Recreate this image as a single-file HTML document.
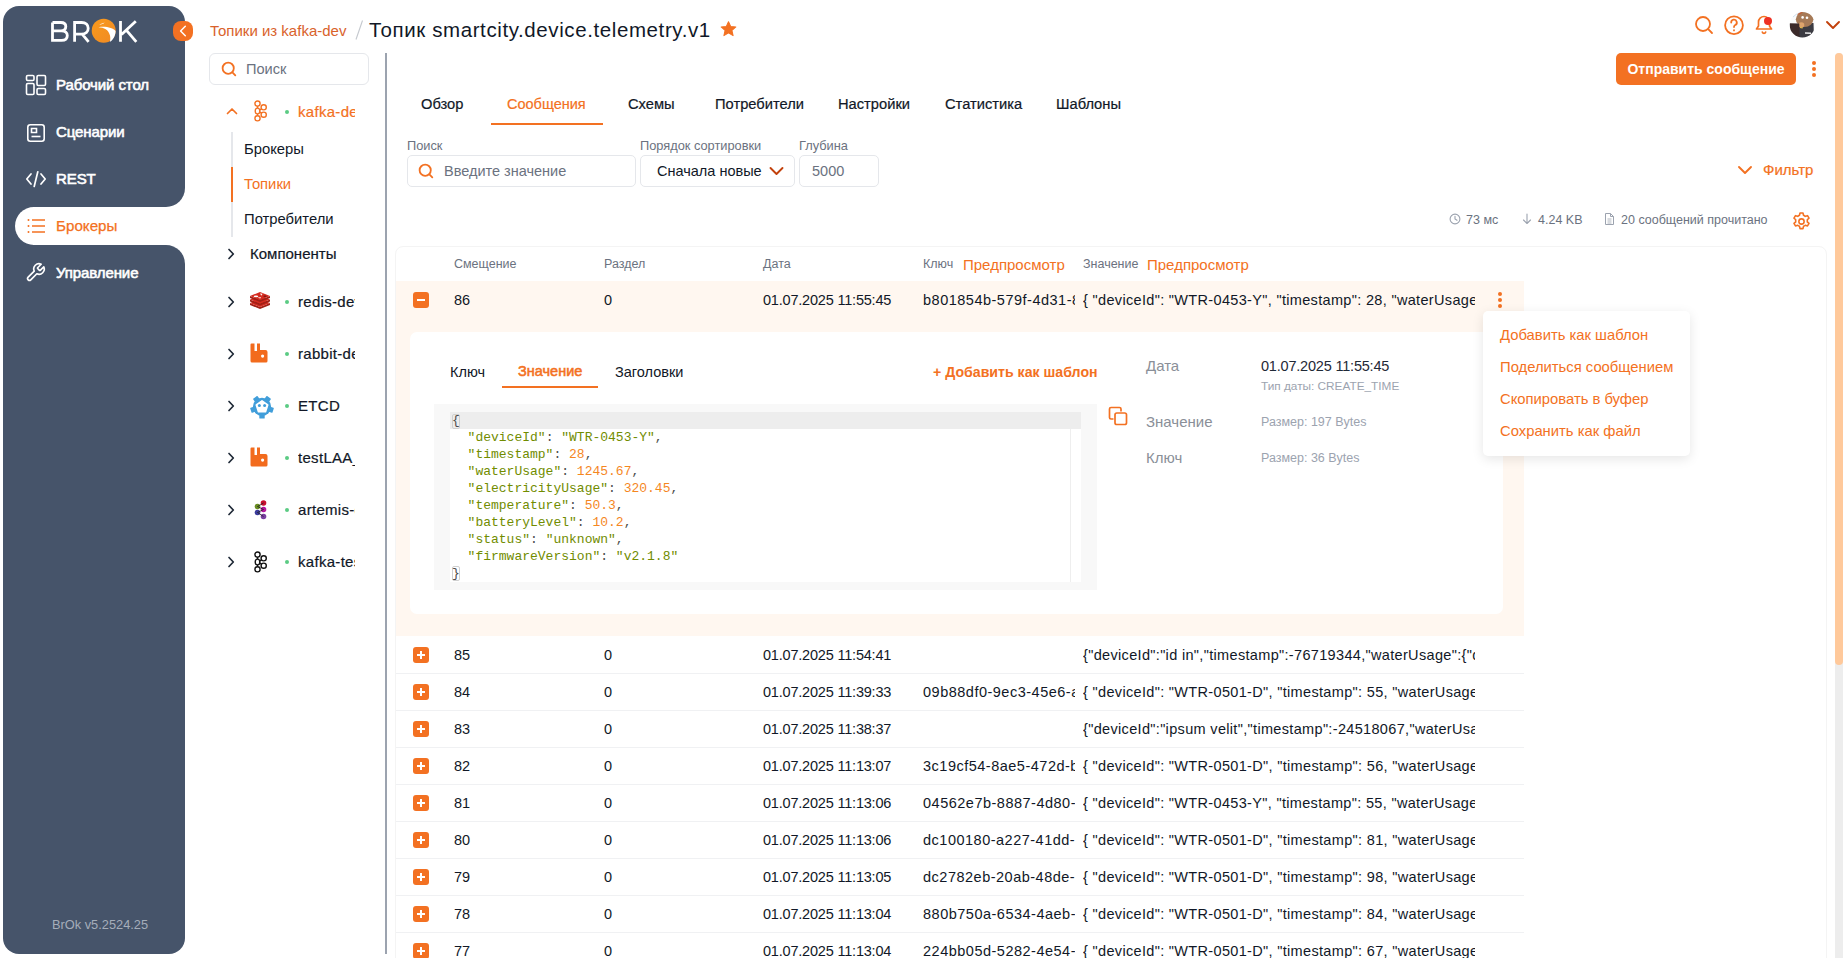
<!DOCTYPE html>
<html><head><meta charset="utf-8">
<style>
*{box-sizing:border-box;margin:0;padding:0}
html,body{width:1848px;height:958px;overflow:hidden;background:#fff;font-family:"Liberation Sans",sans-serif;color:#111827}
.a{position:absolute;white-space:nowrap}
.sb{position:absolute;background:#46546A}
.mi{position:absolute;left:56px;font-size:15px;letter-spacing:-0.1px;font-weight:normal;-webkit-text-stroke:0.6px #fff;color:#fff;line-height:18px}
.ico{position:absolute}
.or{color:#F37122}
</style></head><body>

<!-- SIDEBAR -->
<div class="sb" style="left:3px;top:6px;width:182px;height:201px;border-radius:16px 16px 19px 0"></div>
<div class="sb" style="left:3px;top:207px;width:30px;height:38px"></div>
<div class="a" style="left:15px;top:207px;width:185px;height:38px;background:#fff;border-radius:19px 0 0 19px"></div>
<div class="sb" style="left:3px;top:245px;width:182px;height:709px;border-radius:0 19px 16px 16px"></div>


<!-- logo -->
<svg class="ico" style="left:48px;top:16px" width="92" height="30" viewBox="48 16 92 30">
 <g fill="none" stroke="#fff" stroke-width="2.8">
  <path d="M52.5 22.5 V40.3 H61.5 C65.5 40.3 67.3 38.2 67.3 35.4 C67.3 32.6 65.3 30.9 61.5 30.9 H52.5 M52.5 22.5 H60.8 C64.2 22.5 65.8 24.2 65.8 26.6 C65.8 29.0 64.2 30.9 60.8 30.9"/>
  <path d="M74.6 41.8 V22.5 H81.6 C85.8 22.5 88.2 24.9 88.2 28.3 C88.2 31.7 85.8 34.1 81.6 34.1 H74.6 M82.2 34.1 L88.6 41.8"/>
  <path d="M120.5 20.9 V41.8 M135.8 21.2 L121.5 34.5 M126.3 30.2 L136.3 41.8"/>
 </g>
 <defs><linearGradient id="lg" x1="0" y1="0" x2="1" y2="1"><stop offset="0" stop-color="#F99A1C"/><stop offset="1" stop-color="#F08A24"/></linearGradient></defs>
 <circle cx="103.7" cy="30.8" r="12" fill="url(#lg)"/>
 <path d="M98.5 27.2 C104 27.5 108.5 29.5 110 35.5 C110.5 38 110.3 40.5 109.8 42 C112.5 40.5 115.5 36.5 115.6 31 C113 28 106 26 98.5 27.2 Z" fill="#fff"/>
 <path d="M99.2 24.6 C101 23.6 103 23.2 104.6 22.4 C103.5 23.8 101.5 24.6 99.2 24.6Z" fill="#fff"/>
</svg>
<!-- collapse -->
<div class="a" style="left:173px;top:21px;width:20px;height:20px;border-radius:8px;background:#F37122"></div>
<svg class="ico" style="left:173px;top:21px" width="20" height="20" viewBox="0 0 20 20"><path d="M12.3 5.3 L7.6 10 L12.3 14.7" fill="none" stroke="#fff" stroke-width="1.5" stroke-linecap="round" stroke-linejoin="round"/></svg>

<!-- menu icons -->
<svg class="ico" style="left:25px;top:74px" width="22" height="22" viewBox="0 0 22 22" fill="none" stroke="#fff" stroke-width="1.6">
 <rect x="1.5" y="1.5" width="7.5" height="5" rx="1.2"/><rect x="12" y="1.5" width="8.5" height="10" rx="1.2"/>
 <rect x="1.5" y="9.5" width="7.5" height="11" rx="1.2"/><rect x="12" y="14.5" width="8.5" height="6" rx="1.2"/>
</svg>
<div class="mi" style="top:76px">Рабочий стол</div>

<svg class="ico" style="left:26px;top:123px" width="20" height="20" viewBox="0 0 20 20" fill="none" stroke="#fff" stroke-width="1.6">
 <rect x="1.8" y="1.8" width="16.4" height="16.4" rx="2.5"/><path d="M5.5 5.5h5v4h-5z"/><path d="M5.5 13.5h9"/>
</svg>
<div class="mi" style="top:123px">Сценарии</div>

<svg class="ico" style="left:25px;top:170px" width="22" height="18" viewBox="0 0 22 18" fill="none" stroke="#fff" stroke-width="1.7" stroke-linecap="round" stroke-linejoin="round">
 <path d="M6 4 L1.8 9 L6 14"/><path d="M16 4 L20.2 9 L16 14"/><path d="M12.8 1.8 L9.2 16.5"/>
</svg>
<div class="mi" style="top:170px">REST</div>

<svg class="ico" style="left:27px;top:218px" width="20" height="16" viewBox="0 0 20 16" fill="none" stroke="#F37122" stroke-width="1.7">
 <path d="M1.5 2v0.1M1.5 8v0.1M1.5 14v0.1" stroke-linecap="round" stroke-width="2"/><path d="M5 2h13M5 8h13M5 14h13"/>
</svg>
<div class="mi" style="top:217px;color:#F37122;font-weight:normal;font-size:15.2px;letter-spacing:0;-webkit-text-stroke:0.25px #F37122">Брокеры</div>

<svg class="ico" style="left:25px;top:262px" width="21" height="21" viewBox="0 0 24 24" fill="none" stroke="#fff" stroke-width="1.9" stroke-linecap="round" stroke-linejoin="round"><path d="M14.7 6.3a1 1 0 0 0 0 1.4l1.6 1.6a1 1 0 0 0 1.4 0l3.77-3.77a6 6 0 0 1-7.94 7.94l-6.91 6.91a2.12 2.12 0 0 1-3-3l6.91-6.91a6 6 0 0 1 7.940-7.94l-3.76 3.76z"/></svg>
<div class="mi" style="top:264px">Управление</div>

<div class="a" style="left:52px;top:917px;font-size:12.8px;color:#A5ADBA">BrOk v5.2524.25</div>


<!-- TREE PANEL -->
<div class="a" style="left:209px;top:53px;width:160px;height:32px;border:1px solid #E5E7EB;border-radius:6px"></div>
<svg class="ico" style="left:221px;top:61px" width="16" height="16" viewBox="0 0 16 16" fill="none" stroke="#F37122" stroke-width="1.8" stroke-linecap="round"><circle cx="7.2" cy="7.2" r="5.6"/><path d="M11.4 11.4 L14.3 14.3"/></svg>
<div class="a" style="left:246px;top:61px;font-size:14.6px;color:#6B7280;line-height:16px">Поиск</div>
<div class="a" style="left:385px;top:53px;width:2px;height:901px;background:#9CA3AF"></div>

<!-- kafka-dev -->
<svg class="ico" style="left:225px;top:106px" width="14" height="10" viewBox="0 0 14 10" fill="none" stroke="#F37122" stroke-width="1.7" stroke-linecap="round" stroke-linejoin="round"><path d="M2.5 7.5 L7 3 L11.5 7.5"/></svg>
<svg class="ico kf" style="left:252px;top:100px" width="18" height="22" viewBox="0 0 18 22" fill="none" stroke="#F37122" stroke-width="1.4">
 <circle cx="5.5" cy="3.6" r="2.6"/><ellipse cx="5.5" cy="11" rx="2.3" ry="2.9"/><circle cx="5.5" cy="18.3" r="2.6"/><circle cx="11.7" cy="7.3" r="2.6"/><circle cx="11.7" cy="14.7" r="2.6"/>
 <path d="M5.5 6.2 V8.1 M5.5 13.9 V15.7 M7.6 10.2 L9.4 8.9 M7.6 11.8 L9.4 13.1"/>
</svg>
<div class="a" style="left:285px;top:110px;width:4px;height:4px;border-radius:2px;background:#5BCB84"></div>
<div class="a" style="left:298px;top:103px;width:57px;overflow:hidden;font-size:15px;letter-spacing:0.3px;color:#F37122;line-height:18px;-webkit-text-stroke:0.2px #F37122">kafka-dev</div>
<div class="a" style="left:231px;top:132px;width:2px;height:105px;background:#E5E7EB"></div>
<div class="a" style="left:231px;top:167px;width:2px;height:35px;background:#F37122"></div>
<div class="a" style="left:244px;top:141px;font-size:14.8px;color:#111827;line-height:16px">Брокеры</div>
<div class="a" style="left:244px;top:176px;font-size:14.8px;color:#F37122;line-height:16px">Топики</div>
<div class="a" style="left:244px;top:211px;font-size:14.8px;color:#111827;line-height:16px">Потребители</div>

<svg class="ico" style="left:226px;top:247px" width="10" height="14" viewBox="0 0 10 14" fill="none" stroke="#1F2937" stroke-width="1.7" stroke-linecap="round" stroke-linejoin="round"><path d="M3 2.5 L7.3 7 L3 11.5"/></svg>
<div class="a" style="left:250px;top:246px;font-size:15px;color:#111827;line-height:16px;-webkit-text-stroke:0.2px #111827">Компоненты</div>
<svg class="ico" style="left:226px;top:295px" width="10" height="14" viewBox="0 0 10 14" fill="none" stroke="#1F2937" stroke-width="1.7" stroke-linecap="round" stroke-linejoin="round"><path d="M3 2.5 L7.3 7 L3 11.5"/></svg>
<div class="a" style="left:285px;top:300px;width:4px;height:4px;border-radius:2px;background:#5BCB84"></div>
<div class="a" style="left:298px;top:293px;width:57px;overflow:hidden;font-size:15px;letter-spacing:0.3px;color:#111827;line-height:18px;-webkit-text-stroke:0.2px #111827">redis-dev</div>
<svg class="ico" style="left:226px;top:347px" width="10" height="14" viewBox="0 0 10 14" fill="none" stroke="#1F2937" stroke-width="1.7" stroke-linecap="round" stroke-linejoin="round"><path d="M3 2.5 L7.3 7 L3 11.5"/></svg>
<div class="a" style="left:285px;top:352px;width:4px;height:4px;border-radius:2px;background:#5BCB84"></div>
<div class="a" style="left:298px;top:345px;width:57px;overflow:hidden;font-size:15px;letter-spacing:0.3px;color:#111827;line-height:18px;-webkit-text-stroke:0.2px #111827">rabbit-dev</div>
<svg class="ico" style="left:226px;top:399px" width="10" height="14" viewBox="0 0 10 14" fill="none" stroke="#1F2937" stroke-width="1.7" stroke-linecap="round" stroke-linejoin="round"><path d="M3 2.5 L7.3 7 L3 11.5"/></svg>
<div class="a" style="left:285px;top:404px;width:4px;height:4px;border-radius:2px;background:#5BCB84"></div>
<div class="a" style="left:298px;top:397px;width:57px;overflow:hidden;font-size:15px;letter-spacing:0.3px;color:#111827;line-height:18px;-webkit-text-stroke:0.2px #111827">ETCD</div>
<svg class="ico" style="left:226px;top:451px" width="10" height="14" viewBox="0 0 10 14" fill="none" stroke="#1F2937" stroke-width="1.7" stroke-linecap="round" stroke-linejoin="round"><path d="M3 2.5 L7.3 7 L3 11.5"/></svg>
<div class="a" style="left:285px;top:456px;width:4px;height:4px;border-radius:2px;background:#5BCB84"></div>
<div class="a" style="left:298px;top:449px;width:57px;overflow:hidden;font-size:15px;letter-spacing:0.3px;color:#111827;line-height:18px;-webkit-text-stroke:0.2px #111827">testLAA_x</div>
<svg class="ico" style="left:226px;top:503px" width="10" height="14" viewBox="0 0 10 14" fill="none" stroke="#1F2937" stroke-width="1.7" stroke-linecap="round" stroke-linejoin="round"><path d="M3 2.5 L7.3 7 L3 11.5"/></svg>
<div class="a" style="left:285px;top:508px;width:4px;height:4px;border-radius:2px;background:#5BCB84"></div>
<div class="a" style="left:298px;top:501px;width:57px;overflow:hidden;font-size:15px;letter-spacing:0.3px;color:#111827;line-height:18px;-webkit-text-stroke:0.2px #111827">artemis-dev</div>
<svg class="ico" style="left:226px;top:555px" width="10" height="14" viewBox="0 0 10 14" fill="none" stroke="#1F2937" stroke-width="1.7" stroke-linecap="round" stroke-linejoin="round"><path d="M3 2.5 L7.3 7 L3 11.5"/></svg>
<div class="a" style="left:285px;top:560px;width:4px;height:4px;border-radius:2px;background:#5BCB84"></div>
<div class="a" style="left:298px;top:553px;width:57px;overflow:hidden;font-size:15px;letter-spacing:0.3px;color:#111827;line-height:18px;-webkit-text-stroke:0.2px #111827">kafka-test</div>

<svg class="ico" style="left:250px;top:292px" width="20" height="18" viewBox="0 0 20 18"><path d="M0 11 L10 15 L20 11 V13 L10 17 L0 13Z" fill="#A11F15"/><path d="M0 11 L10 7 L20 11 L10 15Z" fill="#D42B20"/><path d="M0 7.5 L10 11.5 L20 7.5 V9.5 L10 13.5 L0 9.5Z" fill="#A11F15"/><path d="M0 7.5 L10 3.5 L20 7.5 L10 11.5Z" fill="#D42B20"/><path d="M0 4 L10 8 L20 4 V6 L10 10 L0 6Z" fill="#A11F15"/><path d="M0 4 L10 0 L20 4 L10 8Z" fill="#D42B20"/>
 <ellipse cx="6" cy="4.3" rx="2.3" ry="0.9" fill="#fff"/><path d="M10 1.6 L12.6 1.8 L11.3 3.8Z" fill="#fff"/><path d="M7.5 5.8 L11 5 L10.3 6.6Z" fill="#fff"/><ellipse cx="15" cy="4.2" rx="1.6" ry="0.7" fill="#7A1510"/>
</svg>
<svg class="ico" style="left:250px;top:343px" width="18" height="20" viewBox="0 0 18 20"><path d="M1.5 0.5 H4.5 V8 H7 V0.5 H10 V7 H15.5 Q17.5 7 17.5 9 V18 Q17.5 19.5 16 19.5 H2 Q0.5 19.5 0.5 18 V1.5 Q0.5 0.5 1.5 0.5Z" fill="#F26B1D"/><rect x="11" y="11.5" width="3.2" height="3.2" rx="1.6" fill="#fff"/></svg>
<svg class="ico" style="left:250px;top:447px" width="18" height="20" viewBox="0 0 18 20"><path d="M1.5 0.5 H4.5 V8 H7 V0.5 H10 V7 H15.5 Q17.5 7 17.5 9 V18 Q17.5 19.5 16 19.5 H2 Q0.5 19.5 0.5 18 V1.5 Q0.5 0.5 1.5 0.5Z" fill="#F26B1D"/><rect x="11" y="11.5" width="3.2" height="3.2" rx="1.6" fill="#fff"/></svg>

<svg class="ico" style="left:250px;top:395px" width="24" height="24" viewBox="0 0 24 24"><g transform="translate(12,11.8)" fill="#419EDA">
 <circle r="9.1"/><rect x="-2.7" y="6.5" width="5.4" height="5.2" rx="0.6" transform="rotate(0)"/><rect x="-2.7" y="6.5" width="5.4" height="5.2" rx="0.6" transform="rotate(72)"/><rect x="-2.7" y="6.5" width="5.4" height="5.2" rx="0.6" transform="rotate(144)"/><rect x="-2.7" y="6.5" width="5.4" height="5.2" rx="0.6" transform="rotate(216)"/><rect x="-2.7" y="6.5" width="5.4" height="5.2" rx="0.6" transform="rotate(-72)"/>
 <polygon points="0.00,-6.00 5.71,-1.85 3.53,4.85 -3.53,4.85 -5.71,-1.85" fill="#fff" stroke="#fff" stroke-width="1.6" stroke-linejoin="round"/>
 <circle cx="-2.6" cy="-1.4" r="1.5"/><circle cx="2.6" cy="-1.4" r="1.5"/></g></svg>
<svg class="ico" style="left:253px;top:500px" width="16" height="20" viewBox="0 0 16 20">
 <circle cx="10.5" cy="3" r="2.8" fill="#C8102E"/><circle cx="4.5" cy="6.5" r="2.8" fill="#6A8E23"/><circle cx="10.5" cy="9.5" r="2.8" fill="#B5179E"/>
 <circle cx="4.5" cy="12.5" r="2.8" fill="#3C3C9C"/><circle cx="10.5" cy="16.5" r="2.8" fill="#7A3FA0"/>
 <path d="M10.5 3 L4.5 6.5 L10.5 9.5 L4.5 12.5 L10.5 16.5" stroke="#222" stroke-width="0.8" fill="none"/>
</svg>
<svg class="ico" style="left:252px;top:551px" width="18" height="22" viewBox="0 0 18 22" fill="none" stroke="#111" stroke-width="1.4">
 <circle cx="5.5" cy="3.6" r="2.6"/><ellipse cx="5.5" cy="11" rx="2.3" ry="2.9"/><circle cx="5.5" cy="18.3" r="2.6"/><circle cx="11.7" cy="7.3" r="2.6"/><circle cx="11.7" cy="14.7" r="2.6"/>
 <path d="M5.5 6.2 V8.1 M5.5 13.9 V15.7 M7.6 10.2 L9.4 8.9 M7.6 11.8 L9.4 13.1"/>
</svg>


<!-- HEADER -->
<div class="a" style="left:210px;top:22px;font-size:15px;color:#D9622B;line-height:18px">Топики из kafka-dev</div>
<svg class="ico" style="left:354px;top:19px" width="10" height="22" viewBox="0 0 10 22"><path d="M8.5 1.5 L2 20.5" stroke="#C4C8CE" stroke-width="1.1"/></svg>
<div class="a" style="left:369px;top:18px;font-size:20.5px;letter-spacing:0.6px;color:#111827;line-height:24px">Топик smartcity.device.telemetry.v1</div>
<svg class="ico" style="left:720px;top:21px" width="17" height="16" viewBox="0 0 24 23"><path d="M12 1 L15.1 8 L22.6 8.6 L16.9 13.6 L18.6 21 L12 17.1 L5.4 21 L7.1 13.6 L1.4 8.6 L8.9 8Z" fill="#F37122" stroke="#F37122" stroke-width="1.5" stroke-linejoin="round"/></svg>

<svg class="ico" style="left:1694px;top:15px" width="20" height="20" viewBox="0 0 20 20" fill="none" stroke="#F37122" stroke-width="1.8" stroke-linecap="round"><circle cx="9" cy="9" r="7"/><path d="M14.2 14.2 L18 18"/></svg>
<svg class="ico" style="left:1723px;top:14px" width="22" height="22" viewBox="0 0 22 22" fill="none" stroke="#F37122" stroke-width="1.8" stroke-linecap="round"><circle cx="11" cy="11.2" r="8.9"/><path d="M8.2 8.5 a2.8 2.8 0 1 1 4 2.5 c-0.9 0.5 -1.2 1.1 -1.2 2.1"/><path d="M11 16.2 v0.2"/></svg>
<svg class="ico" style="left:1754px;top:13px" width="20" height="22" viewBox="0 0 20 22" fill="none" stroke="#F37122" stroke-width="1.7" stroke-linecap="round" stroke-linejoin="round"><path d="M2.5 16 H17.5 L15.5 13 V9 a5.5 5.5 0 0 0 -11 0 V13 Z"/><path d="M8.3 19 a1.7 1.3 0 0 0 3.4 0"/></svg>
<div class="a" style="left:1764px;top:17px;width:8px;height:8px;border-radius:4px;background:#EE3124"></div>
<svg class="ico" style="left:1789px;top:11px" width="27" height="27" viewBox="0 0 27 27">
 <defs><clipPath id="av"><circle cx="13.4" cy="13.7" r="12.8"/></clipPath></defs>
 <g clip-path="url(#av)">
  <rect width="27" height="27" fill="#FAFBFC"/>
  <path d="M4 6 Q8 1 14 1" stroke="#CFE0EE" stroke-width="1" fill="none"/>
  <path d="M10 12.5 L24.5 12 L25 27 L10 27Z" fill="#3B3B42"/>
  <path d="M16 21.3 L22 21.6 L22 23 L16 22.8Z" fill="#E8E8E8"/>
  <ellipse cx="15.6" cy="8.3" rx="8.8" ry="7.6" fill="#A67A57"/>
  <path d="M8 4 Q10 0.8 14 0.8 L12 3Z" fill="#C0603A"/>
  <circle cx="13.6" cy="6.4" r="1.3" fill="#fff"/><circle cx="18" cy="6.8" r="1.3" fill="#fff"/>
  <ellipse cx="12.3" cy="14" rx="3" ry="2.8" fill="#DDA36C"/>
  <path d="M0.5 12.3 L10.3 12.6 L10.5 26 L1 26Z" fill="#3B2A2A"/>
  <path d="M11 16 L14 16.5 L13.5 17.5 L11 17Z" fill="#E5C04A"/>
 </g>
</svg>
<svg class="ico" style="left:1825px;top:19px" width="16" height="12" viewBox="0 0 16 12" fill="none" stroke="#C2410C" stroke-width="1.9" stroke-linecap="round" stroke-linejoin="round"><path d="M2 3 L8 9 L14 3"/></svg>

<!-- action button -->
<div class="a" style="left:1616px;top:53px;width:180px;height:32px;border-radius:5px;background:#F37122"></div>
<div class="a" style="left:1616px;top:60px;width:180px;text-align:center;font-size:14px;font-weight:bold;color:#fff;line-height:18px">Отправить сообщение</div>
<div class="a" style="left:1812px;top:61px;width:4px;height:4px;border-radius:2px;background:#F37122"></div>
<div class="a" style="left:1812px;top:67px;width:4px;height:4px;border-radius:2px;background:#F37122"></div>
<div class="a" style="left:1812px;top:73px;width:4px;height:4px;border-radius:2px;background:#F37122"></div>
<!-- scrollbar -->
<div class="a" style="left:1835px;top:53px;width:8px;height:905px;background:#EDEDED;border-radius:4px 4px 0 0"></div>
<div class="a" style="left:1835px;top:53px;width:8px;height:612px;background:#FFC99B;border-radius:4px"></div>

<!-- TABS -->
<div class="a" style="left:421px;top:95px;font-size:14.7px;color:#111827;line-height:18px;-webkit-text-stroke:0.2px #111827">Обзор</div>
<div class="a" style="left:507px;top:95px;font-size:14.5px;color:#F37122;line-height:18px;-webkit-text-stroke:0.2px #F37122">Сообщения</div>
<div class="a" style="left:491px;top:123px;width:112px;height:2px;background:#F37122"></div>
<div class="a" style="left:628px;top:95px;font-size:14.7px;color:#111827;line-height:18px;-webkit-text-stroke:0.2px #111827">Схемы</div>
<div class="a" style="left:715px;top:95px;font-size:14.7px;color:#111827;line-height:18px;-webkit-text-stroke:0.2px #111827">Потребители</div>
<div class="a" style="left:838px;top:95px;font-size:14.7px;color:#111827;line-height:18px;-webkit-text-stroke:0.2px #111827">Настройки</div>
<div class="a" style="left:945px;top:95px;font-size:14.7px;color:#111827;line-height:18px;-webkit-text-stroke:0.2px #111827">Статистика</div>
<div class="a" style="left:1056px;top:95px;font-size:14.7px;color:#111827;line-height:18px;-webkit-text-stroke:0.2px #111827">Шаблоны</div>

<!-- FILTERS -->
<div class="a" style="left:407px;top:138px;font-size:12.8px;color:#6B7280;line-height:15px">Поиск</div>
<div class="a" style="left:640px;top:138px;font-size:12.8px;color:#6B7280;line-height:15px">Порядок сортировки</div>
<div class="a" style="left:799px;top:138px;font-size:12.8px;color:#6B7280;line-height:15px">Глубина</div>
<div class="a" style="left:407px;top:155px;width:229px;height:32px;border:1px solid #E5E7EB;border-radius:5px"></div>
<svg class="ico" style="left:418px;top:163px" width="16" height="16" viewBox="0 0 16 16" fill="none" stroke="#F37122" stroke-width="1.8" stroke-linecap="round"><circle cx="7.2" cy="7.2" r="5.6"/><path d="M11.4 11.4 L14.3 14.3"/></svg>
<div class="a" style="left:444px;top:162px;font-size:14.5px;color:#6B7280;line-height:18px">Введите значение</div>
<div class="a" style="left:640px;top:155px;width:155px;height:32px;border:1px solid #E5E7EB;border-radius:5px"></div>
<div class="a" style="left:657px;top:162px;font-size:14.5px;color:#111827;line-height:18px">Сначала новые</div>
<svg class="ico" style="left:768px;top:164px" width="17" height="14" viewBox="0 0 17 14" fill="none" stroke="#C2410C" stroke-width="1.9" stroke-linecap="round" stroke-linejoin="round"><path d="M2.5 4 L8.5 10 L14.5 4"/></svg>
<div class="a" style="left:799px;top:155px;width:80px;height:32px;border:1px solid #E5E7EB;border-radius:5px"></div>
<div class="a" style="left:812px;top:162px;font-size:14.5px;color:#6B7280;line-height:18px">5000</div>

<svg class="ico" style="left:1736px;top:163px" width="18" height="14" viewBox="0 0 18 14" fill="none" stroke="#F37122" stroke-width="1.9" stroke-linecap="round" stroke-linejoin="round"><path d="M3 4 L9 10 L15 4"/></svg>
<div class="a" style="left:1763px;top:161px;font-size:15px;color:#F37122;line-height:18px;-webkit-text-stroke:0.2px #F37122">Фильтр</div>

<!-- STATS -->
<svg class="ico" style="left:1449px;top:213px" width="12" height="12" viewBox="0 0 12 12" fill="none" stroke="#9CA3AF" stroke-width="1.1" stroke-linecap="round"><circle cx="6" cy="6" r="4.9"/><path d="M6 3.2 V6 L8 7.3"/></svg>
<div class="a" style="left:1466px;top:213px;font-size:12.5px;color:#6B7280;line-height:15px">73 мс</div>
<svg class="ico" style="left:1521px;top:212px" width="12" height="14" viewBox="0 0 12 14" fill="none" stroke="#9CA3AF" stroke-width="1.1" stroke-linecap="round" stroke-linejoin="round"><path d="M6 2 V11.5 M2.5 8 L6 11.5 L9.5 8"/></svg>
<div class="a" style="left:1538px;top:213px;font-size:12.5px;color:#6B7280;line-height:15px">4.24 KB</div>
<svg class="ico" style="left:1604px;top:212px" width="11" height="14" viewBox="0 0 11 14" fill="none" stroke="#9CA3AF" stroke-width="1" stroke-linejoin="round"><path d="M1.5 1.5 H6.5 L9.5 4.5 V12.5 H1.5Z M6.5 1.5 V4.5 H9.5"/><path d="M3.5 7 H7.5 M3.5 9 H7.5 M3.5 11 H7.5" stroke-width="0.8"/></svg>
<div class="a" style="left:1621px;top:213px;font-size:12.5px;color:#6B7280;line-height:15px">20 сообщений прочитано</div>
<svg class="ico" style="left:1791px;top:211px" width="21" height="21" viewBox="0 0 24 24" fill="none" stroke="#F37122" stroke-width="1.8" stroke-linecap="round" stroke-linejoin="round"><path d="M10.3 2.3 h3.4 l0.6 2.6 a7.5 7.5 0 0 1 2 1.2 l2.6 -0.8 l1.7 2.9 l-2 1.8 a7.5 7.5 0 0 1 0 2.4 l2 1.8 l-1.7 2.9 l-2.6 -0.8 a7.5 7.5 0 0 1 -2 1.2 l-0.6 2.6 h-3.4 l-0.6 -2.6 a7.5 7.5 0 0 1 -2 -1.2 l-2.6 0.8 l-1.7 -2.9 l2 -1.8 a7.5 7.5 0 0 1 0 -2.4 l-2 -1.8 l1.7 -2.9 l2.6 0.8 a7.5 7.5 0 0 1 2 -1.2Z"/><circle cx="12" cy="12" r="3"/></svg>


<!-- TABLE -->
<div class="a" style="left:395px;top:246px;width:1432px;height:730px;border-radius:8px;border:1px solid #F4F4F4"></div>
<div class="a" style="left:454px;top:257px;font-size:12.5px;color:#6B7280;line-height:15px">Смещение</div>
<div class="a" style="left:604px;top:257px;font-size:12.5px;color:#6B7280;line-height:15px">Раздел</div>
<div class="a" style="left:763px;top:257px;font-size:12.5px;color:#6B7280;line-height:15px">Дата</div>
<div class="a" style="left:923px;top:257px;font-size:12.5px;color:#6B7280;line-height:15px">Ключ</div>
<div class="a" style="left:963px;top:256px;font-size:15px;color:#F37122;line-height:18px">Предпросмотр</div>
<div class="a" style="left:1083px;top:257px;font-size:12.5px;color:#6B7280;line-height:15px">Значение</div>
<div class="a" style="left:1147px;top:256px;font-size:15px;color:#F37122;line-height:18px">Предпросмотр</div>

<div class="a" style="left:396px;top:281px;width:1128px;height:355px;background:#FFF7F0"></div>
<div class="a" style="left:413px;top:292px;width:16px;height:16px;border-radius:3px;background:#F37122"></div>
<div class="a" style="left:417px;top:299px;width:8px;height:2px;background:#fff"></div>
<div class="a" style="left:454px;top:291px;font-size:14.5px;color:#111827;line-height:18px">86</div>
<div class="a" style="left:604px;top:291px;font-size:14.5px;color:#111827;line-height:18px">0</div>
<div class="a" style="left:763px;top:291px;font-size:14.5px;color:#111827;line-height:18px;letter-spacing:-0.2px">01.07.2025 11:55:45</div>
<div class="a" style="left:923px;top:291px;width:152px;overflow:hidden;font-size:14.5px;letter-spacing:0.5px;color:#111827;line-height:18px">b801854b-579f-4d31-8a1c-2f</div>
<div class="a" style="left:1083px;top:291px;width:392px;overflow:hidden;font-size:14.5px;letter-spacing:0.33px;color:#111827;line-height:18px">{ "deviceId": "WTR-0453-Y", "timestamp": 28, "waterUsage": 1245.67 }</div>
<div class="a" style="left:1498px;top:292px;width:4px;height:4px;border-radius:2px;background:#F37122"></div>
<div class="a" style="left:1498px;top:298px;width:4px;height:4px;border-radius:2px;background:#F37122"></div>
<div class="a" style="left:1498px;top:304px;width:4px;height:4px;border-radius:2px;background:#F37122"></div>

<!-- inner card -->
<div class="a" style="left:410px;top:332px;width:1093px;height:282px;background:#fff;border-radius:7px"></div>
<div class="a" style="left:450px;top:363px;font-size:14.5px;color:#111827;line-height:18px">Ключ</div>
<div class="a" style="left:518px;top:362px;font-size:14.5px;-webkit-text-stroke:0.55px #F37122;color:#F37122;line-height:18px">Значение</div>
<div class="a" style="left:502px;top:386px;width:96px;height:2px;background:#F37122"></div>
<div class="a" style="left:615px;top:363px;font-size:14.5px;color:#111827;line-height:18px">Заголовки</div>
<div class="a" style="left:933px;top:363px;font-size:14.15px;font-weight:bold;color:#F37122;line-height:18px">+ Добавить как шаблон</div>

<div class="a" style="left:434px;top:404px;width:663px;height:186px;background:#F8F8F8"></div>
<div class="a" style="left:450px;top:412px;width:631px;height:170px;background:#fff"></div>
<div class="a" style="left:450px;top:412px;width:631px;height:17px;background:#EDEDED"></div>
<div class="a" style="left:1070px;top:429px;width:1px;height:153px;background:#EEEEEE"></div>
<div class="a" style="left:452px;top:414px;width:8px;height:15px;border:1px solid #D0D0D0;border-radius:2px"></div>
<div class="a" style="left:452px;top:566px;width:8px;height:15px;border:1px solid #D0D0D0;border-radius:2px"></div>
<pre class="a" style="white-space:pre;left:452px;top:412px;font-family:'Liberation Mono',monospace;font-size:13px;line-height:17px;color:#4D4D4C">{
  <span style="color:#718C00">"deviceId"</span>: <span style="color:#718C00">"WTR-0453-Y"</span>,
  <span style="color:#718C00">"timestamp"</span>: <span style="color:#F5871F">28</span>,
  <span style="color:#718C00">"waterUsage"</span>: <span style="color:#F5871F">1245.67</span>,
  <span style="color:#718C00">"electricityUsage"</span>: <span style="color:#F5871F">320.45</span>,
  <span style="color:#718C00">"temperature"</span>: <span style="color:#F5871F">50.3</span>,
  <span style="color:#718C00">"batteryLevel"</span>: <span style="color:#F5871F">10.2</span>,
  <span style="color:#718C00">"status"</span>: <span style="color:#718C00">"unknown"</span>,
  <span style="color:#718C00">"firmwareVersion"</span>: <span style="color:#718C00">"v2.1.8"</span>
}</pre>
<svg class="ico" style="left:1107px;top:405px" width="22" height="22" viewBox="0 0 22 22" fill="none" stroke="#F37122" stroke-width="1.7" stroke-linejoin="round"><path d="M6.5 14 H4 Q2.5 14 2.5 12.5 V4 Q2.5 2.5 4 2.5 H12.5 Q14 2.5 14 4 V6.5"/><rect x="8" y="8" width="11.5" height="11.5" rx="1.8"/></svg>

<div class="a" style="left:1146px;top:357px;font-size:15px;color:#8A8F98;line-height:18px">Дата</div>
<div class="a" style="left:1261px;top:357px;font-size:14.5px;color:#1F2937;line-height:18px;letter-spacing:-0.2px">01.07.2025 11:55:45</div>
<div class="a" style="left:1261px;top:379px;font-size:11.8px;color:#9CA3AF;line-height:15px">Тип даты: CREATE_TIME</div>
<div class="a" style="left:1146px;top:413px;font-size:15px;color:#8A8F98;line-height:18px">Значение</div>
<div class="a" style="left:1261px;top:415px;font-size:12.5px;color:#9CA3AF;line-height:15px">Размер: 197 Bytes</div>
<div class="a" style="left:1146px;top:449px;font-size:15px;color:#8A8F98;line-height:18px">Ключ</div>
<div class="a" style="left:1261px;top:451px;font-size:12.5px;color:#9CA3AF;line-height:15px">Размер: 36 Bytes</div>
<div class="a" style="left:396px;top:673px;width:1128px;height:1px;background:#F0F1F3"></div>
<div class="a" style="left:413px;top:647px;width:16px;height:16px;border-radius:3px;background:#F37122"></div><div class="a" style="left:417px;top:654px;width:8px;height:2px;background:#fff"></div><div class="a" style="left:420px;top:651px;width:2px;height:8px;background:#fff"></div>
<div class="a" style="left:454px;top:646px;font-size:14.5px;line-height:18px">85</div><div class="a" style="left:604px;top:646px;font-size:14.5px;line-height:18px">0</div><div class="a" style="left:763px;top:646px;font-size:14.5px;line-height:18px;letter-spacing:-0.2px">01.07.2025 11:54:41</div>
<div class="a" style="left:1083px;top:646px;width:392px;overflow:hidden;font-size:14.5px;letter-spacing:0.33px;line-height:18px">{"deviceId":"id in","timestamp":-76719344,"waterUsage":{"d</div>
<div class="a" style="left:396px;top:710px;width:1128px;height:1px;background:#F0F1F3"></div>
<div class="a" style="left:413px;top:684px;width:16px;height:16px;border-radius:3px;background:#F37122"></div><div class="a" style="left:417px;top:691px;width:8px;height:2px;background:#fff"></div><div class="a" style="left:420px;top:688px;width:2px;height:8px;background:#fff"></div>
<div class="a" style="left:454px;top:683px;font-size:14.5px;line-height:18px">84</div><div class="a" style="left:604px;top:683px;font-size:14.5px;line-height:18px">0</div><div class="a" style="left:763px;top:683px;font-size:14.5px;line-height:18px;letter-spacing:-0.2px">01.07.2025 11:39:33</div>
<div class="a" style="left:923px;top:683px;width:152px;overflow:hidden;font-size:14.5px;letter-spacing:0.5px;line-height:18px">09b88df0-9ec3-45e6-a1b2</div>
<div class="a" style="left:1083px;top:683px;width:392px;overflow:hidden;font-size:14.5px;letter-spacing:0.33px;line-height:18px">{ "deviceId": "WTR-0501-D", "timestamp": 55, "waterUsage": 1 }</div>
<div class="a" style="left:396px;top:747px;width:1128px;height:1px;background:#F0F1F3"></div>
<div class="a" style="left:413px;top:721px;width:16px;height:16px;border-radius:3px;background:#F37122"></div><div class="a" style="left:417px;top:728px;width:8px;height:2px;background:#fff"></div><div class="a" style="left:420px;top:725px;width:2px;height:8px;background:#fff"></div>
<div class="a" style="left:454px;top:720px;font-size:14.5px;line-height:18px">83</div><div class="a" style="left:604px;top:720px;font-size:14.5px;line-height:18px">0</div><div class="a" style="left:763px;top:720px;font-size:14.5px;line-height:18px;letter-spacing:-0.2px">01.07.2025 11:38:37</div>
<div class="a" style="left:1083px;top:720px;width:392px;overflow:hidden;font-size:14.5px;letter-spacing:0.33px;line-height:18px">{"deviceId":"ipsum velit","timestamp":-24518067,"waterUsage"</div>
<div class="a" style="left:396px;top:784px;width:1128px;height:1px;background:#F0F1F3"></div>
<div class="a" style="left:413px;top:758px;width:16px;height:16px;border-radius:3px;background:#F37122"></div><div class="a" style="left:417px;top:765px;width:8px;height:2px;background:#fff"></div><div class="a" style="left:420px;top:762px;width:2px;height:8px;background:#fff"></div>
<div class="a" style="left:454px;top:757px;font-size:14.5px;line-height:18px">82</div><div class="a" style="left:604px;top:757px;font-size:14.5px;line-height:18px">0</div><div class="a" style="left:763px;top:757px;font-size:14.5px;line-height:18px;letter-spacing:-0.2px">01.07.2025 11:13:07</div>
<div class="a" style="left:923px;top:757px;width:152px;overflow:hidden;font-size:14.5px;letter-spacing:0.5px;line-height:18px">3c19cf54-8ae5-472d-b1c2</div>
<div class="a" style="left:1083px;top:757px;width:392px;overflow:hidden;font-size:14.5px;letter-spacing:0.33px;line-height:18px">{ "deviceId": "WTR-0501-D", "timestamp": 56, "waterUsage": 1 }</div>
<div class="a" style="left:396px;top:821px;width:1128px;height:1px;background:#F0F1F3"></div>
<div class="a" style="left:413px;top:795px;width:16px;height:16px;border-radius:3px;background:#F37122"></div><div class="a" style="left:417px;top:802px;width:8px;height:2px;background:#fff"></div><div class="a" style="left:420px;top:799px;width:2px;height:8px;background:#fff"></div>
<div class="a" style="left:454px;top:794px;font-size:14.5px;line-height:18px">81</div><div class="a" style="left:604px;top:794px;font-size:14.5px;line-height:18px">0</div><div class="a" style="left:763px;top:794px;font-size:14.5px;line-height:18px;letter-spacing:-0.2px">01.07.2025 11:13:06</div>
<div class="a" style="left:923px;top:794px;width:152px;overflow:hidden;font-size:14.5px;letter-spacing:0.5px;line-height:18px">04562e7b-8887-4d80-a1b2</div>
<div class="a" style="left:1083px;top:794px;width:392px;overflow:hidden;font-size:14.5px;letter-spacing:0.33px;line-height:18px">{ "deviceId": "WTR-0453-Y", "timestamp": 55, "waterUsage": 1 }</div>
<div class="a" style="left:396px;top:858px;width:1128px;height:1px;background:#F0F1F3"></div>
<div class="a" style="left:413px;top:832px;width:16px;height:16px;border-radius:3px;background:#F37122"></div><div class="a" style="left:417px;top:839px;width:8px;height:2px;background:#fff"></div><div class="a" style="left:420px;top:836px;width:2px;height:8px;background:#fff"></div>
<div class="a" style="left:454px;top:831px;font-size:14.5px;line-height:18px">80</div><div class="a" style="left:604px;top:831px;font-size:14.5px;line-height:18px">0</div><div class="a" style="left:763px;top:831px;font-size:14.5px;line-height:18px;letter-spacing:-0.2px">01.07.2025 11:13:06</div>
<div class="a" style="left:923px;top:831px;width:152px;overflow:hidden;font-size:14.5px;letter-spacing:0.5px;line-height:18px">dc100180-a227-41dd-9c1c</div>
<div class="a" style="left:1083px;top:831px;width:392px;overflow:hidden;font-size:14.5px;letter-spacing:0.33px;line-height:18px">{ "deviceId": "WTR-0501-D", "timestamp": 81, "waterUsage": 1 }</div>
<div class="a" style="left:396px;top:895px;width:1128px;height:1px;background:#F0F1F3"></div>
<div class="a" style="left:413px;top:869px;width:16px;height:16px;border-radius:3px;background:#F37122"></div><div class="a" style="left:417px;top:876px;width:8px;height:2px;background:#fff"></div><div class="a" style="left:420px;top:873px;width:2px;height:8px;background:#fff"></div>
<div class="a" style="left:454px;top:868px;font-size:14.5px;line-height:18px">79</div><div class="a" style="left:604px;top:868px;font-size:14.5px;line-height:18px">0</div><div class="a" style="left:763px;top:868px;font-size:14.5px;line-height:18px;letter-spacing:-0.2px">01.07.2025 11:13:05</div>
<div class="a" style="left:923px;top:868px;width:152px;overflow:hidden;font-size:14.5px;letter-spacing:0.5px;line-height:18px">dc2782eb-20ab-48de-a1b2</div>
<div class="a" style="left:1083px;top:868px;width:392px;overflow:hidden;font-size:14.5px;letter-spacing:0.33px;line-height:18px">{ "deviceId": "WTR-0501-D", "timestamp": 98, "waterUsage": 1 }</div>
<div class="a" style="left:396px;top:932px;width:1128px;height:1px;background:#F0F1F3"></div>
<div class="a" style="left:413px;top:906px;width:16px;height:16px;border-radius:3px;background:#F37122"></div><div class="a" style="left:417px;top:913px;width:8px;height:2px;background:#fff"></div><div class="a" style="left:420px;top:910px;width:2px;height:8px;background:#fff"></div>
<div class="a" style="left:454px;top:905px;font-size:14.5px;line-height:18px">78</div><div class="a" style="left:604px;top:905px;font-size:14.5px;line-height:18px">0</div><div class="a" style="left:763px;top:905px;font-size:14.5px;line-height:18px;letter-spacing:-0.2px">01.07.2025 11:13:04</div>
<div class="a" style="left:923px;top:905px;width:152px;overflow:hidden;font-size:14.5px;letter-spacing:0.5px;line-height:18px">880b750a-6534-4aeb-a1b2</div>
<div class="a" style="left:1083px;top:905px;width:392px;overflow:hidden;font-size:14.5px;letter-spacing:0.33px;line-height:18px">{ "deviceId": "WTR-0501-D", "timestamp": 84, "waterUsage": 1 }</div>
<div class="a" style="left:396px;top:969px;width:1128px;height:1px;background:#F0F1F3"></div>
<div class="a" style="left:413px;top:943px;width:16px;height:16px;border-radius:3px;background:#F37122"></div><div class="a" style="left:417px;top:950px;width:8px;height:2px;background:#fff"></div><div class="a" style="left:420px;top:947px;width:2px;height:8px;background:#fff"></div>
<div class="a" style="left:454px;top:942px;font-size:14.5px;line-height:18px">77</div><div class="a" style="left:604px;top:942px;font-size:14.5px;line-height:18px">0</div><div class="a" style="left:763px;top:942px;font-size:14.5px;line-height:18px;letter-spacing:-0.2px">01.07.2025 11:13:04</div>
<div class="a" style="left:923px;top:942px;width:152px;overflow:hidden;font-size:14.5px;letter-spacing:0.5px;line-height:18px">224bb05d-5282-4e54-a1b2</div>
<div class="a" style="left:1083px;top:942px;width:392px;overflow:hidden;font-size:14.5px;letter-spacing:0.33px;line-height:18px">{ "deviceId": "WTR-0501-D", "timestamp": 67, "waterUsage": 1 }</div>

<!-- dropdown -->
<div class="a" style="left:1483px;top:311px;width:207px;height:145px;background:#fff;border-radius:5px;box-shadow:0 3px 12px rgba(0,0,0,0.10)"></div>
<div class="a" style="left:1500px;top:326px;font-size:14.8px;color:#F37122;line-height:18px">Добавить как шаблон</div>
<div class="a" style="left:1500px;top:358px;font-size:14.8px;color:#F37122;line-height:18px">Поделиться сообщением</div>
<div class="a" style="left:1500px;top:390px;font-size:14.8px;color:#F37122;line-height:18px">Скопировать в буфер</div>
<div class="a" style="left:1500px;top:422px;font-size:14.8px;color:#F37122;line-height:18px">Сохранить как файл</div>

</body></html>
